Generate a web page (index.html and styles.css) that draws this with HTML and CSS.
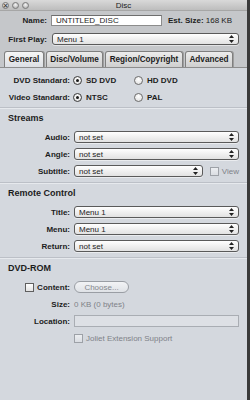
FILE: index.html
```html
<!DOCTYPE html>
<html lang="en">
<head>
  <meta charset="utf8"/>
  <title>Disc</title>
  <link rel="stylesheet" href="styles.css">
</head>
<body>
  <div class="window">
    <div class="titlebar">
      <div class="lights">
        <span class="light close">&times;</span>
        <span class="light"></span>
        <span class="light"></span>
      </div>
      <div class="title">Disc</div>
      <div></div>
    </div>

    <div class="head">
      <div class="lbl">Name:</div>
      <div class="field">UNTITLED_DISC</div>
      <div class="est"><b>Est. Size:</b> 168 KB</div>
      <div class="lbl">First Play:</div>
      <div class="popup wide">Menu 1<svg class="arrows" width="5" height="8" viewBox="0 0 5 8"><path d="M2.5 0L5 3H0z M2.5 8L0 5h5z" fill="#222"/></svg></div>
    </div>

    <div class="tabs">
      <div class="tab active">General</div>
      <div class="tab">Disc/Volume</div>
      <div class="tab">Region/Copyright</div>
      <div class="tab">Advanced</div>
    </div>

    <div class="panel">
      <div class="section first">
        <div class="form">
          <div class="lbl">DVD Standard:</div>
          <div class="radios">
            <span class="opt"><span class="radio on"></span>SD DVD</span>
            <span class="opt"><span class="radio"></span>HD DVD</span>
          </div>
          <div class="lbl">Video Standard:</div>
          <div class="radios">
            <span class="opt"><span class="radio on"></span>NTSC</span>
            <span class="opt"><span class="radio"></span>PAL</span>
          </div>
        </div>
      </div>

      <div class="section">
        <h3>Streams</h3>
        <div class="form">
          <div class="lbl">Audio:</div>
          <div class="popup">not set<svg class="arrows" width="5" height="8" viewBox="0 0 5 8"><path d="M2.5 0L5 3H0z M2.5 8L0 5h5z" fill="#222"/></svg></div>
          <div class="lbl">Angle:</div>
          <div class="popup">not set<svg class="arrows" width="5" height="8" viewBox="0 0 5 8"><path d="M2.5 0L5 3H0z M2.5 8L0 5h5z" fill="#222"/></svg></div>
          <div class="lbl">Subtitle:</div>
          <div class="ctl">
            <div class="popup">not set<svg class="arrows" width="5" height="8" viewBox="0 0 5 8"><path d="M2.5 0L5 3H0z M2.5 8L0 5h5z" fill="#222"/></svg></div>
            <span class="check off"></span><span class="dim">View</span>
          </div>
        </div>
      </div>

      <div class="section">
        <h3>Remote Control</h3>
        <div class="form">
          <div class="lbl">Title:</div>
          <div class="popup">Menu 1<svg class="arrows" width="5" height="8" viewBox="0 0 5 8"><path d="M2.5 0L5 3H0z M2.5 8L0 5h5z" fill="#222"/></svg></div>
          <div class="lbl">Menu:</div>
          <div class="popup">Menu 1<svg class="arrows" width="5" height="8" viewBox="0 0 5 8"><path d="M2.5 0L5 3H0z M2.5 8L0 5h5z" fill="#222"/></svg></div>
          <div class="lbl">Return:</div>
          <div class="popup">not set<svg class="arrows" width="5" height="8" viewBox="0 0 5 8"><path d="M2.5 0L5 3H0z M2.5 8L0 5h5z" fill="#222"/></svg></div>
        </div>
      </div>

      <div class="section last">
        <h3>DVD-ROM</h3>
        <div class="form">
          <div class="lbl"><span class="check"></span>Content:</div>
          <div><span class="button">Choose...</span></div>
          <div class="lbl">Size:</div>
          <div class="dim">0 KB (0 bytes)</div>
          <div class="lbl">Location:</div>
          <div class="field off"></div>
          <div></div>
          <div class="ctl"><span class="check off"></span><span class="dim">Joliet Extension Support</span></div>
        </div>
      </div>
    </div>
  </div>
</body>
</html>
```

FILE: styles.css
```css
* { box-sizing: border-box; }
html, body { margin: 0; height: 100%; }
body {
  background: #3a3a3a;
  font-family: "Liberation Sans", Arial, sans-serif; font-size: 8px; color: #1c1c1c;
}
.window { width: 247px; height: 400px; background: #c5c7ca; display: flex; flex-direction: column; overflow: hidden; }

.titlebar {
  height: 11px; display: grid; grid-template-columns: 1fr auto 1fr; align-items: center;
  background: linear-gradient(#d9d9d9, #bdbdbd); border-bottom: 1px solid #a6a6a6;
}
.lights { display: flex; gap: 3px; padding-left: 2px; }
.light {
  width: 7px; height: 7px; border-radius: 50%; border: 1px solid #7a7a7a;
  background: radial-gradient(circle at 50% 35%, #f4f4f4, #a9a9a9);
  font-size: 7px; line-height: 5px; text-align: center; color: #333; font-weight: bold;
}
.title { font-size: 8px; color: #222; }

.head {
  display: grid; grid-template-columns: 39px 111px 1fr; column-gap: 4px; row-gap: 7px;
  padding: 4px 8px 0; align-items: center;
}
.lbl { font-weight: bold; text-align: right; white-space: nowrap; display: flex; justify-content: flex-end; align-items: center; }
.field {
  height: 11px; background: #fff; border: 1px solid #8c8c8c; border-top-color: #6e6e6e;
  padding: 0 4px; line-height: 9px; white-space: nowrap;
}
.field.off { height: 12px; background: #dde0e5; border-color: #a9adb3; }
.est { padding-left: 2px; white-space: nowrap; }
.popup {
  height: 12px; border: 1px solid #5a5a5a; border-radius: 3px; padding: 0 4px;
  background: linear-gradient(#ffffff, #f0f0f0 50%, #e2e2e2);
  display: flex; align-items: center; justify-content: space-between; white-space: nowrap;
  box-shadow: 0 1px 0 rgba(255,255,255,0.5);
}
.popup.wide { grid-column: 2 / 4; margin-left: 1px; }
.arrows { flex: none; }

.tabs { display: flex; gap: 2px; padding-left: 4px; margin-top: 6px; height: 16px; }
.tab {
  font-weight: bold; font-size: 8.2px; padding: 0 5px; display: flex; align-items: center; justify-content: center;
  border: 1px solid #7f7f7f; border-bottom: none; border-radius: 3px 3px 0 0;
  background: linear-gradient(#ececec, #cfcfcf); box-shadow: 1px 0 0 #9e9e9e;
}
.tab:nth-child(1) { width: 40px; }
.tab:nth-child(2) { width: 57px; }
.tab:nth-child(3) { width: 78px; }
.tab:nth-child(4) { width: 48px; }
.tab.active { background: linear-gradient(#f6f6f6, #dcdfe4); }

.panel { flex: 1; background: #d4d8de; border-top: 1px solid #8d8d8d; }
.section { padding: 5px 0; border-top: 1px solid #bcc0c7; box-shadow: inset 0 1px 0 #e6e9ed; }
.section.first { padding: 6px 0 4px; border-top: none; box-shadow: none; }
.section h3 { margin: 0 0 7px 8px; font-size: 9px; line-height: 11px; }

.form {
  display: grid; grid-template-columns: 62px 1fr; column-gap: 4px; row-gap: 5px;
  padding: 0 8px; align-items: center; grid-auto-rows: 12px;
}
.ctl { display: flex; align-items: center; }
.ctl .popup { flex: 1; margin-right: 7px; }
.radios { display: flex; margin-left: -1px; }
.opt { width: 61px; display: flex; align-items: center; gap: 4px; font-weight: bold; }
.radio {
  width: 9px; height: 9px; border-radius: 50%; border: 1px solid #3c3c3c; flex: none;
  background: radial-gradient(circle at 50% 35%, #ffffff, #dcdcdc);
  display: flex; align-items: center; justify-content: center;
}
.radio:not(.on) { border-color: #6c6c6c; }
.radio.on::after { content: ""; width: 3px; height: 3px; border-radius: 50%; background: #1a1a1a; }
.check {
  width: 9px; height: 9px; border: 1px solid #5f5f5f; flex: none; margin-right: 3px;
  background: linear-gradient(#ffffff, #e3e3e3);
}
.check.off { border-color: #9da1a7; background: linear-gradient(#eceef1, #dadde2); }
.dim { color: #7f8288; white-space: nowrap; }
.button {
  display: inline-flex; align-items: center; justify-content: center; width: 55px; height: 12px;
  border: 1px solid #9a9ea4; border-radius: 6px; color: #85888d;
  background: linear-gradient(#f2f3f5, #dfe2e6);
}
```
